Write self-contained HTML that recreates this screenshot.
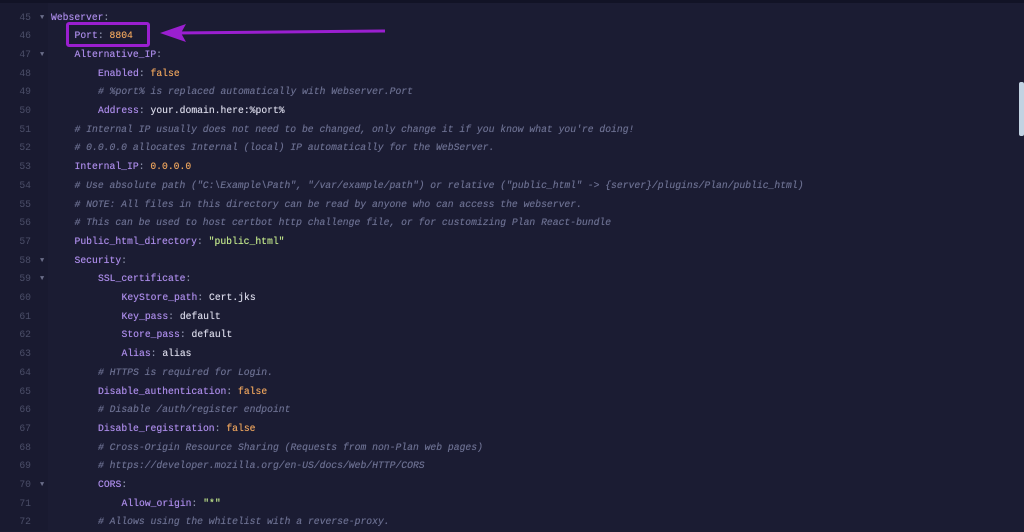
<!DOCTYPE html><html><head><style>
html,body{margin:0;padding:0;}
body{width:1024px;height:531px;overflow:hidden;background:#1b1c33;position:relative;font-family:"Liberation Mono",monospace;font-size:9.72px;}
.top{position:absolute;left:0;top:0;width:1024px;height:3px;background:#121326;}
.gut{position:absolute;left:0;top:3px;width:48px;height:528px;background:#191a30;}
.l{position:absolute;left:0;height:18.7px;line-height:18.7px;white-space:pre;width:1000px;}
.n{position:absolute;left:0;width:31px;text-align:right;color:#4b4e68;}
.f{position:absolute;left:40px;color:#6a6d88;font-size:7px;}
.c{position:absolute;color:#d6d6e6;text-shadow:0 0 0.4px currentColor;}
.k{color:#a98ae6;}
.o{color:#e8a15c;}
.s{color:#bfe38a;}
.m{color:#6a6e8f;font-style:italic;}
.p{color:#8a8fa8;}
.sb{position:absolute;left:1019px;top:82px;width:5px;height:54px;background:#c2d2e2;border-radius:2px;}
.box{position:absolute;left:66px;top:22px;width:78px;height:19px;border:3px solid #9a1fd0;border-radius:3px;}
</style></head><body>
<div class="top"></div><div class="gut"></div>
<div class="sb"></div>
<div class="box"></div>
<svg style="position:absolute;left:0;top:0" width="1024" height="531"><line x1="175" y1="33" x2="385" y2="31" stroke="#9a1fd0" stroke-width="3"/><path d="M160 33 L186 24 L181 33 L186 42 Z" fill="#9a1fd0"/></svg>
<div id="code"></div>
<script>
const L=[
[0,'<span class="k">Webserver</span><span class="p">:</span>',1],
[1,'<span class="k">Port</span><span class="p">:</span> <span class="o">8804</span>'],
[1,'<span class="k">Alternative_IP</span><span class="p">:</span>',1],
[2,'<span class="k">Enabled</span><span class="p">:</span> <span class="o">false</span>'],
[2,'<span class="m"># %port% is replaced automatically with Webserver.Port</span>'],
[2,'<span class="k">Address</span><span class="p">:</span> your.domain.here:%port%'],
[1,'<span class="m"># Internal IP usually does not need to be changed, only change it if you know what you\'re doing!</span>'],
[1,'<span class="m"># 0.0.0.0 allocates Internal (local) IP automatically for the WebServer.</span>'],
[1,'<span class="k">Internal_IP</span><span class="p">:</span> <span class="o">0.0.0.0</span>'],
[1,'<span class="m"># Use absolute path ("C:\\Example\\Path", "/var/example/path") or relative ("public_html" -&gt; {server}/plugins/Plan/public_html)</span>'],
[1,'<span class="m"># NOTE: All files in this directory can be read by anyone who can access the webserver.</span>'],
[1,'<span class="m"># This can be used to host certbot http challenge file, or for customizing Plan React-bundle</span>'],
[1,'<span class="k">Public_html_directory</span><span class="p">:</span> <span class="s">"public_html"</span>'],
[1,'<span class="k">Security</span><span class="p">:</span>',1],
[2,'<span class="k">SSL_certificate</span><span class="p">:</span>',1],
[3,'<span class="k">KeyStore_path</span><span class="p">:</span> Cert.jks'],
[3,'<span class="k">Key_pass</span><span class="p">:</span> default'],
[3,'<span class="k">Store_pass</span><span class="p">:</span> default'],
[3,'<span class="k">Alias</span><span class="p">:</span> alias'],
[2,'<span class="m"># HTTPS is required for Login.</span>'],
[2,'<span class="k">Disable_authentication</span><span class="p">:</span> <span class="o">false</span>'],
[2,'<span class="m"># Disable /auth/register endpoint</span>'],
[2,'<span class="k">Disable_registration</span><span class="p">:</span> <span class="o">false</span>'],
[2,'<span class="m"># Cross-Origin Resource Sharing (Requests from non-Plan web pages)</span>'],
[2,'<span class="m"># https://developer.mozilla.org/en-US/docs/Web/HTTP/CORS</span>'],
[2,'<span class="k">CORS</span><span class="p">:</span>',1],
[3,'<span class="k">Allow_origin</span><span class="p">:</span> <span class="s">"*"</span>'],
[2,'<span class="m"># Allows using the whitelist with a reverse-proxy.</span>']
];
let h='';
L.forEach((x,i)=>{const y=8.5+i*18.7;const xl=51+x[0]*23.5;
h+=`<div class="l" style="top:${y}px"><span class="n">${45+i}</span>${x[2]?'<span class="f">▼</span>':''}<span class="c" style="left:${xl}px">${x[1]}</span></div>`;});
document.getElementById('code').innerHTML=h;
</script>
</body></html>
